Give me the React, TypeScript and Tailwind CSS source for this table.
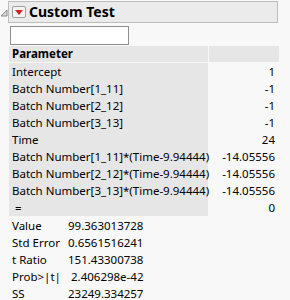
const rows: [string, string][] = [
  ['Intercept', '1'],
  ['Batch Number[1_11]', '-1'],
  ['Batch Number[2_12]', '-1'],
  ['Batch Number[3_13]', '-1'],
  ['Time', '24'],
  ['Batch Number[1_11]*(Time-9.94444)', '-14.05556'],
  ['Batch Number[2_12]*(Time-9.94444)', '-14.05556'],
  ['Batch Number[3_13]*(Time-9.94444)', '-14.05556'],
  [' =', '0'],
];

const stats: [string, string][] = [
  ['Value', '99.363013728'],
  ['Std Error', '0.6561516241'],
  ['t Ratio', '151.43300738'],
  ['Prob>|t|', ' 2.406298e-42'],
  ['SS', '23249.334257'],
];

const App = () => {
  return (
    <div
      className="w-[290px] h-[300px] overflow-hidden bg-[#f8f8f8] text-[11.5px] text-black"
      style={{ fontFamily: '"Noto Sans", sans-serif' }}
    >
      {/* Title bar */}
      <div className="flex items-center pt-px">
        <svg width="8" height="22" viewBox="0 0 8 22" className="shrink-0">
          <polygon points="7,9 7,15 1,15" fill="#d8d8d8" stroke="#8a8a8a" strokeWidth="1" />
        </svg>
        <div className="flex items-center w-[270px] h-[22px] bg-[#ebebeb] border border-[#bdbdbd]">
          <div className="ml-[3px] w-[14px] h-[12px] flex items-center justify-center bg-[#f4f4f4] border border-[#a0a0a0] rounded-[2px]">
            <svg width="8" height="5" viewBox="0 0 8 5">
              <polygon points="0,0 8,0 4,5" fill="#d3222a" />
            </svg>
          </div>
          <span className="ml-[3px] text-[14px] font-bold leading-none">Custom Test</span>
        </div>
      </div>

      {/* Input */}
      <div className="ml-[10px] mt-[3px] w-[119px] h-[19px] bg-white border border-[#8f8f8f]" />

      {/* Table */}
      <div className="ml-[9px] mt-px w-[270px]">
        <div className="flex gap-px h-[16px] leading-[16px]">
          <div className="w-[199px] bg-[#e6e6e6] pl-[3px] font-bold">Parameter</div>
          <div className="w-[70px] bg-[#e6e6e6]" />
        </div>
        <div className="flex gap-px mt-px">
          <div className="w-[199px] bg-[#e6e6e6]">
            {rows.map(([name]) => (
              <div key={name} className="h-[17px] leading-[17px] pl-[3px] whitespace-pre">
                {name}
              </div>
            ))}
          </div>
          <div className="w-[70px]">
            {rows.map(([name, v]) => (
              <div key={name} className="h-[17px] leading-[17px] pr-[4px] text-right">
                {v}
              </div>
            ))}
          </div>
        </div>
      </div>

      {/* Stats */}
      <div className="ml-[12px] mt-px">
        {stats.map(([k, v]) => (
          <div key={k} className="flex h-[17px] leading-[17px]">
            <span className="w-[56px]">{k}</span>
            <span className="whitespace-pre">{v}</span>
          </div>
        ))}
      </div>
    </div>
  );
};

export default App;
